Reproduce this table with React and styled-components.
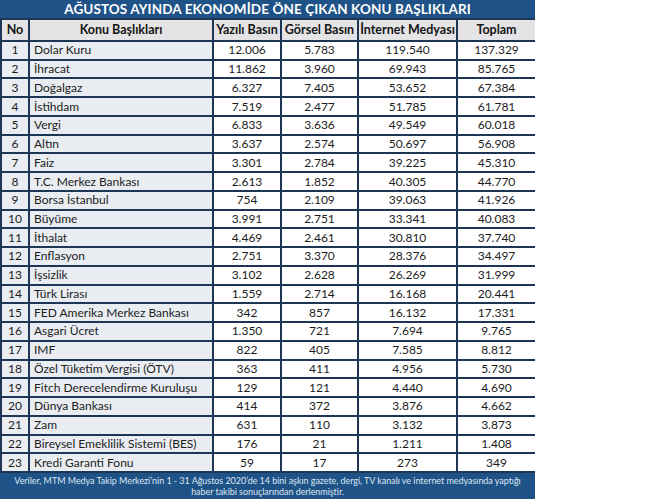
import React from "react";
import styled, { createGlobalStyle } from "styled-components";

const Global = createGlobalStyle`
  html, body { margin: 0; padding: 0; background: #ffffff; }
  body { font-family: Lato, "Open Sans", sans-serif; }
`;

const Wrapper = styled.div`
  width: 535px;
  display: flex;
  flex-direction: column;
`;

const Title = styled.div`
  height: 18px;
  background: #1f5286;
  color: #ffffff;
  font-weight: 700;
  font-size: 13.5px;
  display: flex;
  align-items: center;
  justify-content: center;
  letter-spacing: 0.1px;
`;

const Grid = styled.div`
  display: grid;
  grid-template-columns: 26px 182px 66px 75px 97px 77px;
  grid-template-rows: 20px repeat(23, 1fr);
  height: 455px;
  box-sizing: border-box;
  gap: 2px;
  padding: 2px;
  background: #1d3655;
`;

const Cell = styled.div`
  display: flex;
  align-items: center;
  justify-content: ${(p) => (p.$left ? "flex-start" : "center")};
  padding-left: ${(p) => (p.$left ? "4px" : "0")};
  background: ${(p) => (p.$head ? "#e4e4e6" : p.$shade ? "#e9edf2" : "#ffffff")};
  font-weight: ${(p) => (p.$head ? 700 : 400)};
  font-size: ${(p) => (p.$head ? "12.5px" : "12px")};
  color: ${(p) => (p.$head ? "#141414" : "#1c1c1c")};
  white-space: nowrap;
  overflow: hidden;
  line-height: 1;
`;

const Footer = styled.div`
  height: 26px;
  background: #1f5286;
  color: #dbe6f2;
  font-size: 9px;
  line-height: 11.5px;
  letter-spacing: -0.05px;
  text-align: center;
  display: flex;
  flex-direction: column;
  justify-content: center;
  white-space: nowrap;
`;

const rows = [
  ["Dolar Kuru", "12.006", "5.783", "119.540", "137.329"],
  ["İhracat", "11.862", "3.960", "69.943", "85.765"],
  ["Doğalgaz", "6.327", "7.405", "53.652", "67.384"],
  ["İstihdam", "7.519", "2.477", "51.785", "61.781"],
  ["Vergi", "6.833", "3.636", "49.549", "60.018"],
  ["Altın", "3.637", "2.574", "50.697", "56.908"],
  ["Faiz", "3.301", "2.784", "39.225", "45.310"],
  ["T.C. Merkez Bankası", "2.613", "1.852", "40.305", "44.770"],
  ["Borsa İstanbul", "754", "2.109", "39.063", "41.926"],
  ["Büyüme", "3.991", "2.751", "33.341", "40.083"],
  ["İthalat", "4.469", "2.461", "30.810", "37.740"],
  ["Enflasyon", "2.751", "3.370", "28.376", "34.497"],
  ["İşsizlik", "3.102", "2.628", "26.269", "31.999"],
  ["Türk Lirası", "1.559", "2.714", "16.168", "20.441"],
  ["FED Amerika Merkez Bankası", "342", "857", "16.132", "17.331"],
  ["Asgari Ücret", "1.350", "721", "7.694", "9.765"],
  ["IMF", "822", "405", "7.585", "8.812"],
  ["Özel Tüketim Vergisi (ÖTV)", "363", "411", "4.956", "5.730"],
  ["Fitch Derecelendirme Kuruluşu", "129", "121", "4.440", "4.690"],
  ["Dünya Bankası", "414", "372", "3.876", "4.662"],
  ["Zam", "631", "110", "3.132", "3.873"],
  ["Bireysel Emeklilik Sistemi (BES)", "176", "21", "1.211", "1.408"],
  ["Kredi Garanti Fonu", "59", "17", "273", "349"],
];

const headers = ["No", "Konu Başlıkları", "Yazılı Basın", "Görsel Basın", "İnternet Medyası", "Toplam"];

export default function App() {
  return (
    <>
      <Global />
      <Wrapper>
        <Title>AĞUSTOS AYINDA EKONOMİDE ÖNE ÇIKAN KONU BAŞLIKLARI</Title>
        <Grid>
          {headers.map((h) => (
            <Cell key={h} $head>
              {h}
            </Cell>
          ))}
          {rows.map((r, i) => (
            <React.Fragment key={i}>
              <Cell $shade>{i + 1}</Cell>
              <Cell $shade $left>
                {r[0]}
              </Cell>
              <Cell>{r[1]}</Cell>
              <Cell>{r[2]}</Cell>
              <Cell>{r[3]}</Cell>
              <Cell>{r[4]}</Cell>
            </React.Fragment>
          ))}
        </Grid>
        <Footer>
          <div>Veriler, MTM Medya Takip Merkezi’nin 1 - 31 Ağustos 2020’de 14 bini aşkın gazete, dergi, TV kanalı ve internet medyasında yaptığı</div>
          <div>haber takibi sonuçlarından derlenmiştir.</div>
        </Footer>
      </Wrapper>
    </>
  );
}
